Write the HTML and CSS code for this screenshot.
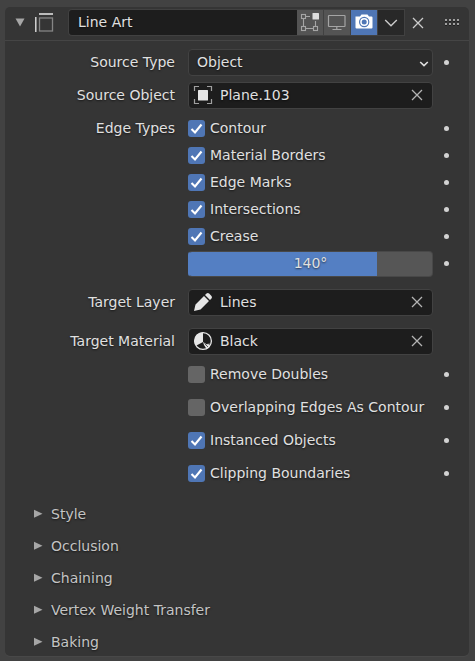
FILE: index.html
```html
<!DOCTYPE html>
<html lang="en">
<head>
<meta charset="utf-8">
<title>Line Art</title>
<link rel="stylesheet" href="styles.css">
</head>
<body>
<svg width="0" height="0" class="defs">
  <symbol id="check" viewBox="0 0 17 17"><path d="M3.500 9l3.500 3.500 6.500-8" fill="none" stroke="#fff" stroke-width="2.100"/></symbol>
  <symbol id="cross" viewBox="0 0 12 12"><path d="M1 1l10 10M11 1L1 11" fill="none" stroke="currentColor" stroke-width="1.300"/></symbol>
</svg>
<main class="panel">
  <header class="head">
    <svg class="tri" width="10" height="10"><path d="M.5 1.500h9L5 9.500z" fill="#a6a6a6"/></svg>
    <svg class="mod" width="20" height="20" fill="none"><path d="M4 1h14" stroke="#dedede" stroke-width="1.600"/><path d="M.8 4v15" stroke="#dedede" stroke-width="1.400"/><rect x="4.500" y="5" width="13" height="13" stroke="#858585" stroke-width="1.300"/></svg>
    <div class="name">Line Art</div>
    <div class="tool on">
      <svg width="20" height="20" fill="none" stroke="#a5a5a5" stroke-width="1.100"><rect x="1.500" y="2.500" width="4" height="4"/><rect x="1.500" y="14.500" width="4" height="4"/><rect x="13.500" y="14.500" width="4" height="4"/><path d="M6 4.500h4M3.500 7v7M6 16.500h7M15.500 9v5"/><rect x="12.500" y="1" width="6.500" height="6.500" rx=".6" fill="#dedede" stroke="none"/></svg>
    </div>
    <div class="tool on">
      <svg width="20" height="20" fill="none" stroke="#a5a5a5" stroke-width="1.200"><rect x="1.500" y="3.500" width="16.500" height="11" rx=".5"/><path d="M9.800 14.500v2.500M5.500 17.500h9"/></svg>
    </div>
    <div class="tool blue">
      <svg width="20" height="20"><path d="M1.500 4.500H6L7.500 2.500h6L15 4.500h2.500q1 0 1 1V15.500q0 1-1 1h-15q-1 0-1-1z" fill="#fff"/><circle cx="10.200" cy="10" r="4.600" fill="none" stroke="#4f76b5" stroke-width="1.200"/><circle cx="10.200" cy="10" r="2.500" fill="#4f76b5"/></svg>
    </div>
    <div class="tool"><svg class="chev" width="14" height="8"><path d="M1.200 1l5.800 5.700L12.800 1" fill="none" stroke="#ccc" stroke-width="1.400"/></svg></div>
    <svg class="close" width="12" height="12"><use href="#cross"/></svg>
    <svg class="grip" width="15" height="8"><path d="M0 1h14M0 5h14" stroke="#a0a0a0" stroke-width="2" stroke-dasharray="2 2"/><path d="M0 2.500h14M0 6.500h14" stroke="#202020" stroke-width="1" stroke-dasharray="2 2"/></svg>
  </header>
  <section class="props">
    <div class="row"><span class="label">Source Type</span><div class="field menu">Object<svg width="10" height="6"><path d="M1.200 1L5 4.600 8.800 1" fill="none" stroke="#e0e0e0" stroke-width="1.600"/></svg></div><i class="dot"></i></div>
    <div class="row gap"><span class="label">Source Object</span><div class="field pick"><svg width="20" height="20"><path d="M1.500 6V1.500H6M14 1.500h4.500V6M18.500 14v4.500H14M6 18.500H1.500V14" fill="none" stroke="#a0a0a0" stroke-width="1.200"/><rect x="5" y="5" width="10" height="10.500" rx=".5" fill="#e6e6e6"/></svg><span>Plane.103</span><svg class="x" width="12" height="12"><use href="#cross"/></svg></div></div>
    <div class="row gap"><span class="label">Edge Types</span><div class="check"><b class="box yes"><svg width="17" height="17"><use href="#check"/></svg></b><span>Contour</span></div><i class="dot"></i></div>
    <div class="row"><span></span><div class="check"><b class="box yes"><svg width="17" height="17"><use href="#check"/></svg></b><span>Material Borders</span></div><i class="dot"></i></div>
    <div class="row"><span></span><div class="check"><b class="box yes"><svg width="17" height="17"><use href="#check"/></svg></b><span>Edge Marks</span></div><i class="dot"></i></div>
    <div class="row"><span></span><div class="check"><b class="box yes"><svg width="17" height="17"><use href="#check"/></svg></b><span>Intersections</span></div><i class="dot"></i></div>
    <div class="row"><span></span><div class="check"><b class="box yes"><svg width="17" height="17"><use href="#check"/></svg></b><span>Crease</span></div><i class="dot"></i></div>
    <div class="row"><span></span><div class="slider">140°</div><i class="dot"></i></div>
    <div class="row wide"><span class="label">Target Layer</span><div class="field pick"><svg width="20" height="20" fill="#e6e6e6"><path d="M1 19l1.500-6.500L11 4l5 5-8.500 8.500zM12 3l1.500-1.500q1.300-1 2.600 0l2.400 2.400q1 1.300 0 2.600L17 8z"/></svg><span>Lines</span><svg class="x" width="12" height="12"><use href="#cross"/></svg></div></div>
    <div class="row wide"><span class="label">Target Material</span><div class="field pick"><svg width="20" height="20"><path d="M10 11V1.500A8.500 8.500 0 0 0 3 14.800z" fill="#e6e6e6"/><path d="M10 11l1 3 2.500 4 2-1 2.500-4-3-.5-1 1z" fill="#e6e6e6"/><path d="M11.500 12.500l4 4M14 11.500l3 2.500" stroke="#1d1d1d" stroke-width=".7"/><circle cx="10" cy="10" r="8.400" fill="none" stroke="#e6e6e6" stroke-width="1.300"/></svg><span>Black</span><svg class="x" width="12" height="12"><use href="#cross"/></svg></div></div>
    <div class="row gap"><span></span><div class="check"><b class="box"></b><span>Remove Doubles</span></div><i class="dot"></i></div>
    <div class="row gap"><span></span><div class="check"><b class="box"></b><span>Overlapping Edges As Contour</span></div><i class="dot"></i></div>
    <div class="row gap"><span></span><div class="check"><b class="box yes"><svg width="17" height="17"><use href="#check"/></svg></b><span>Instanced Objects</span></div><i class="dot"></i></div>
    <div class="row gap"><span></span><div class="check"><b class="box yes"><svg width="17" height="17"><use href="#check"/></svg></b><span>Clipping Boundaries</span></div><i class="dot"></i></div>
  </section>
  <nav class="subs">
    <div class="sub"><svg width="9" height="10"><path d="M0 .8v7.900L8.500 4.700z" fill="#a6a6a6"/></svg>Style</div>
    <div class="sub"><svg width="9" height="10"><path d="M0 .8v7.900L8.500 4.700z" fill="#a6a6a6"/></svg>Occlusion</div>
    <div class="sub"><svg width="9" height="10"><path d="M0 .8v7.900L8.500 4.700z" fill="#a6a6a6"/></svg>Chaining</div>
    <div class="sub"><svg width="9" height="10"><path d="M0 .8v7.900L8.500 4.700z" fill="#a6a6a6"/></svg>Vertex Weight Transfer</div>
    <div class="sub"><svg width="9" height="10"><path d="M0 .8v7.900L8.500 4.700z" fill="#a6a6a6"/></svg>Baking</div>
  </nav>
</main>
</body>
</html>
```
FILE: styles.css
```css
* { box-sizing: border-box; }
body {
  margin: 0;
  height: 661px;
  padding: 7px 6px 5px 5px;
  background: #424242;
  color: #e0e0e0;
  font: 14px/20px "DejaVu Sans", sans-serif;
  text-shadow: 0 1px 2px rgba(0, 0, 0, .6);
  overflow: hidden;
}
svg { display: block; flex: none; }
.defs { position: absolute; }
.panel {
  height: 649px;
  background: #353535;
  border-radius: 5px;
  box-shadow: 0 1px 0 #484848;
}
.head {
  display: flex;
  align-items: center;
  height: 34px;
  padding: 0 9px 3px 10px;
  border-bottom: 1px solid #454545;
}
.mod { margin-left: 10px; margin-top: 1px; }
.name {
  width: 229px;
  height: 27px;
  margin-left: 13px;
  padding: 2px 9px;
  background: #1d1d1d;
  border: 1px solid #414141;
  border-right: 0;
  border-radius: 4px 0 0 4px;
}
.tool {
  display: flex;
  align-items: center;
  justify-content: center;
  width: 27px;
  height: 27px;
  background: #282828;
  border: 1px solid #414141;
  border-left-width: 0;
}
.tool.on { background: #545454; }
.tool.blue { background: #4f76b5; }
.chev { margin-top: 2px; }
.close { margin-left: 7px; margin-top: 1px; color: #ccc; }
.grip { margin-left: auto; margin-top: 1px; }
.props { padding-top: 8px; }
.row {
  display: grid;
  grid-template-columns: 170px 245px 1fr;
  column-gap: 13px;
  align-items: center;
  height: 27px;
}
.gap { margin-top: 6px; }
.wide { margin-top: 12px; }
.label { padding-bottom: 2px; text-align: right; white-space: nowrap; }
.field {
  display: flex;
  align-items: center;
  height: 27px;
  border: 1px solid #424242;
  border-radius: 4px;
  padding-bottom: 1px;
}
.menu {
  justify-content: space-between;
  padding-left: 8px;
  padding-right: 3px;
  background: #2b2b2b;
}
.menu svg { margin-top: 4px; }
.pick { padding-left: 4px; background: #1d1d1d; }
.pick span { margin-left: 7px; }
.x { margin-left: auto; margin-right: 9px; color: #b4b4b4; }
.check { display: flex; align-items: center; white-space: nowrap; }
.check span { padding-bottom: 2px; }
.box {
  width: 17px;
  height: 17px;
  margin-right: 5px;
  border-radius: 3px;
  background: #656565;
}
.box.yes { background: #4f76b5; }
.dot {
  width: 5px;
  height: 5px;
  margin-left: -2px;
  border-radius: 50%;
  background: #d2d2d2;
}
.slider {
  height: 26px;
  padding-top: 1px;
  text-align: center;
  border: 1px solid #484848;
  border-left-color: #547fc3;
  border-radius: 4px;
  background: linear-gradient(90deg, #547fc3 188px, #565656 188px);
}
.subs {
  display: grid;
  row-gap: 5px;
  padding: 13px 0 0 29px;
  color: #c4c4c4;
}
.sub { display: flex; align-items: center; height: 27px; }
.sub svg { margin-right: 8px; }
```
